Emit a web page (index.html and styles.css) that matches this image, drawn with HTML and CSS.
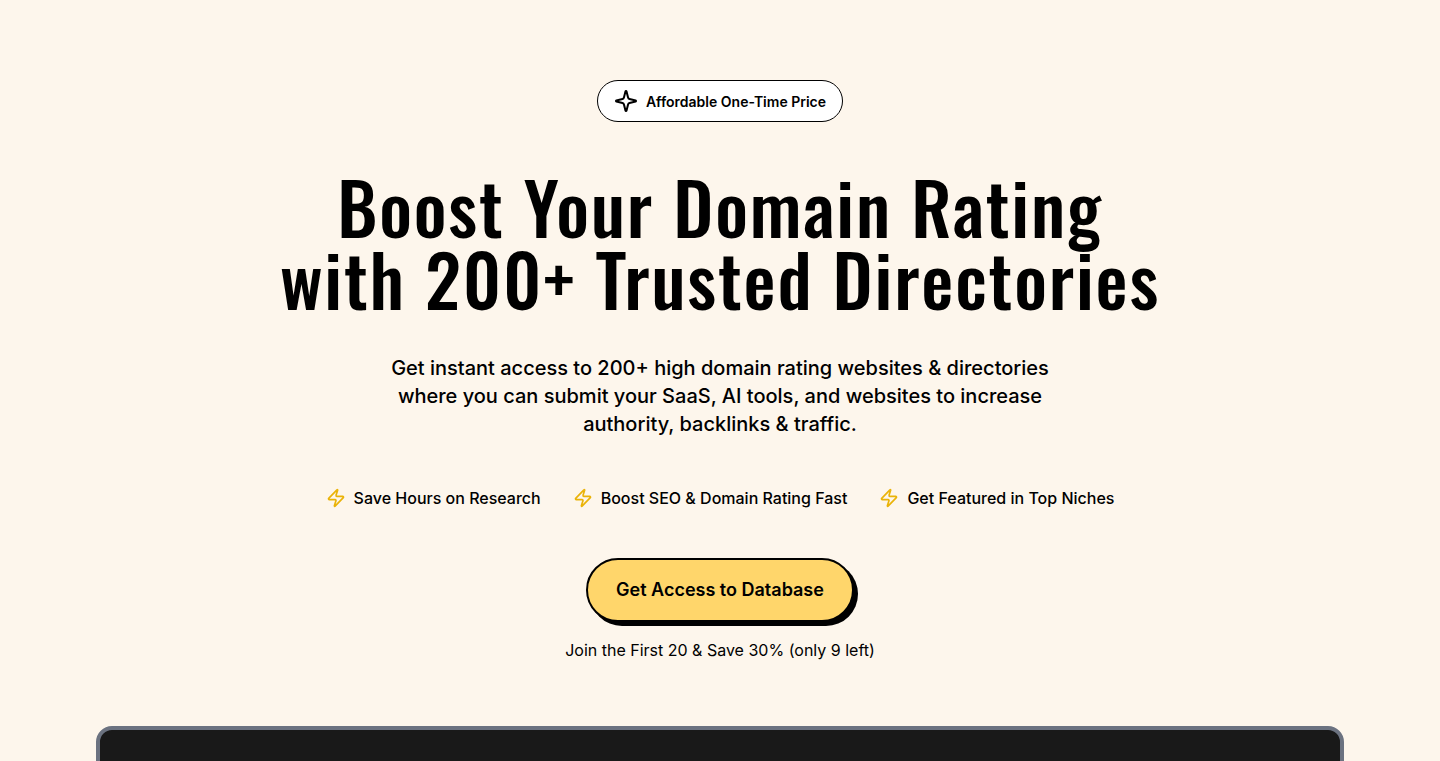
FILE: index.html
```html
<!DOCTYPE html>
<html lang="en">
<head>
  <meta charset="UTF-8" />
  <meta name="viewport" content="width=device-width, initial-scale=1.0"/>
  <title>Boost Your Domain Rating</title>
  <link rel="stylesheet" href="styles.css">
</head>
<body>
  <main class="hero">
    <div class="badge">
      <svg class="badge-icon" viewBox="0 0 24 24" aria-hidden="true">
        <path d="M9.937 15.5A2 2 0 0 0 8.5 14.063l-6.135-1.582a.5.5 0 0 1 0-.962L8.5 9.936A2 2 0 0 0 9.937 8.5l1.582-6.135a.5.5 0 0 1 .963 0L14.063 8.5A2 2 0 0 0 15.5 9.937l6.135 1.581a.5.5 0 0 1 0 .964L15.5 14.063a2 2 0 0 0-1.437 1.437l-1.582 6.135a.5.5 0 0 1-.963 0z"/>
      </svg>
      <span>Affordable One-Time Price</span>
    </div>

    <h1>Boost Your Domain Rating<br />with 200+ Trusted Directories</h1>

    <p class="lead">Get instant access to 200+ high domain rating websites &amp; directories where you can submit your SaaS, AI tools, and websites to increase authority, backlinks &amp; traffic.</p>

    <ul class="features">
      <li>
        <svg class="bolt" viewBox="0 0 24 24" aria-hidden="true"><path d="M4 14a1 1 0 0 1-.78-1.63l9.9-10.2a.5.5 0 0 1 .86.46l-1.92 6.02A1 1 0 0 0 13 10h7a1 1 0 0 1 .78 1.63l-9.9 10.2a.5.5 0 0 1-.86-.46l1.92-6.02A1 1 0 0 0 11 14z"/></svg>
        Save Hours on Research
      </li>
      <li>
        <svg class="bolt" viewBox="0 0 24 24" aria-hidden="true"><path d="M4 14a1 1 0 0 1-.78-1.63l9.9-10.2a.5.5 0 0 1 .86.46l-1.92 6.02A1 1 0 0 0 13 10h7a1 1 0 0 1 .78 1.63l-9.9 10.2a.5.5 0 0 1-.86-.46l1.92-6.02A1 1 0 0 0 11 14z"/></svg>
        Boost SEO &amp; Domain Rating Fast
      </li>
      <li>
        <svg class="bolt" viewBox="0 0 24 24" aria-hidden="true"><path d="M4 14a1 1 0 0 1-.78-1.63l9.9-10.2a.5.5 0 0 1 .86.46l-1.92 6.02A1 1 0 0 0 13 10h7a1 1 0 0 1 .78 1.63l-9.9 10.2a.5.5 0 0 1-.86-.46l1.92-6.02A1 1 0 0 0 11 14z"/></svg>
        Get Featured in Top Niches
      </li>
    </ul>

    <button class="cta" type="button">Get Access to Database</button>
    <p class="offer">Join the First 20 &amp; Save 30% (only 9 left)</p>

    <div class="preview"></div>
  </main>
</body>
</html>
```
FILE: styles.css
```css
* {
  box-sizing: border-box;
}

body {
  margin: 0;
  height: 100vh;
  overflow: hidden;
  background: #fdf6ec;
  color: #000;
  font-family: "Inter Variable", Inter, "Liberation Sans", sans-serif;
  font-size: 16px;
  line-height: 24px;
}

.hero {
  display: flex;
  flex-direction: column;
  align-items: center;
  max-width: 1280px;
  margin: 0 auto;
  padding: 80px 16px 0;
  text-align: center;
}

.badge {
  display: flex;
  align-items: center;
  gap: 8px;
  padding: 8px 16px;
  background: #fff;
  border: 1px solid #000;
  border-radius: 999px;
  font-size: 14px;
  font-weight: 600;
  line-height: 21px;
}

.badge-icon,
.bolt {
  flex: none;
  fill: none;
  stroke: currentColor;
  stroke-width: 2;
  stroke-linecap: round;
  stroke-linejoin: round;
}

.badge-icon {
  width: 24px;
  height: 24px;
}

h1 {
  margin: 48px 0 40px;
  font-family: Oswald, "Liberation Sans Narrow", "Liberation Sans", sans-serif;
  font-size: 72px;
  font-weight: 500;
  line-height: 72px;
  letter-spacing: 0.025em;
}

.lead {
  max-width: 672px;
  margin: 0;
  font-size: 20px;
  font-weight: 500;
  line-height: 28px;
}

.features {
  display: flex;
  flex-wrap: wrap;
  justify-content: center;
  gap: 16px 32px;
  margin: 48px 0;
  padding: 0;
  list-style: none;
  font-weight: 500;
}

.features li {
  display: flex;
  align-items: center;
  gap: 8px;
}

.bolt {
  width: 20px;
  height: 20px;
  color: #eab308;
}

.cta {
  padding: 16px 28px;
  background: #ffd66b;
  border: 2px solid #000;
  border-radius: 999px;
  box-shadow: 4px 4px 0 #000;
  color: #000;
  font-family: inherit;
  font-size: 18px;
  font-weight: 600;
  line-height: 28px;
  cursor: pointer;
}

.offer {
  margin: 16px 0 64px;
}

.preview {
  width: 100%;
  height: 640px;
  background: #191919;
  border: 4px solid #6b7280;
  border-radius: 16px;
}
```
